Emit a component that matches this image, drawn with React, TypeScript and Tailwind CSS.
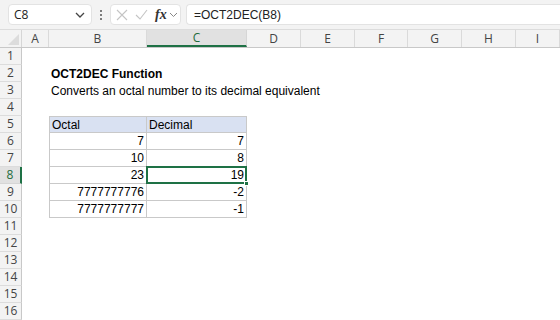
import React from "react";

const COLS = ["A", "B", "C", "D", "E", "F", "G", "H", "I"];
const WIDTHS = [27, 98, 100, 54, 54, 53, 54, 54, 44];

type Cell = { text: string; align?: "left" | "right"; bold?: boolean; table?: "head" | "body" };

function getCell(r: number, c: number): Cell | null {
  if (r === 2 && c === 1) return { text: "OCT2DEC Function", bold: true };
  if (r === 3 && c === 1) return { text: "Converts an octal number to its decimal equivalent" };
  if (r === 5 && c === 1) return { text: "Octal", table: "head" };
  if (r === 5 && c === 2) return { text: "Decimal", table: "head" };
  const data: Record<number, [string, string]> = {
    6: ["7", "7"],
    7: ["10", "8"],
    8: ["23", "19"],
    9: ["7777777776", "-2"],
    10: ["7777777777", "-1"],
  };
  if (data[r] && (c === 1 || c === 2)) return { text: data[r][c - 1], align: "right", table: "body" };
  return null;
}

export default function App() {
  const rows = Array.from({ length: 16 }, (_, i) => i + 1);
  return (
    <div
      className="w-[560px] h-[320px] overflow-hidden bg-white text-black"
      style={{ fontFamily: '"Liberation Sans", Arial, sans-serif' }}
    >
      {/* Toolbar */}
      <div className="h-[30px] bg-[#f3f3f3] border-b border-[#dcdcdc] flex items-center pl-[8px]">
        <div className="w-[84px] shrink-0 h-[21px] bg-white rounded-[4px] border border-[#e3e3e3] flex items-center justify-between pl-[5px] pr-[6px]">
          <span className="text-[12px] text-[#222]" style={{ fontFamily: '"Open Sans", sans-serif' }}>C8</span>
          <svg width="10" height="6" viewBox="0 0 10 6"><path d="M1 1 L5 5 L9 1" fill="none" stroke="#444" strokeWidth="1.3" /></svg>
        </div>
        <div className="w-[18px] shrink-0 flex flex-col items-center justify-center gap-[2px]">
          <div className="w-[2px] h-[2px] bg-[#555] rounded-full" />
          <div className="w-[2px] h-[2px] bg-[#555] rounded-full" />
          <div className="w-[2px] h-[2px] bg-[#555] rounded-full" />
        </div>
        <div className="w-[71px] shrink-0 h-[21px] bg-white rounded-[4px] border border-[#e3e3e3] flex items-center pl-[5px] gap-[7px]">
          <svg width="12" height="12" viewBox="0 0 12 12"><path d="M1 1 L11 11 M11 1 L1 11" stroke="#c4c4c4" strokeWidth="1.1" /></svg>
          <svg width="13" height="11" viewBox="0 0 13 11"><path d="M1 6 L5 10 L12 1" fill="none" stroke="#c4c4c4" strokeWidth="1.1" /></svg>
          <div className="flex items-center gap-[2px]">
            <span className="text-[14px] italic font-bold text-[#333] leading-none" style={{ fontFamily: '"Liberation Serif", serif' }}>fx</span>
            <svg width="9" height="6" viewBox="0 0 9 6"><path d="M1 1 L4.5 4.5 L8 1" fill="none" stroke="#888" strokeWidth="1" /></svg>
          </div>
        </div>
        <div className="ml-[5px] flex-1 h-[21px] bg-white rounded-l-[4px] border border-r-0 border-[#e3e3e3] flex items-center pl-[7px]">
          <span className="text-[12px] text-[#222]">=OCT2DEC(B8)</span>
        </div>
      </div>

      {/* Column headers */}
      <div className="flex h-[18px] bg-[#f3f3f3] border-b border-[#c8c8c8]">
        <div className="w-[22px] shrink-0 h-full relative border-r border-[#d6d6d6]">
          <svg className="absolute right-[2px] bottom-[2px]" width="11" height="11" viewBox="0 0 11 11"><path d="M11 0 L11 11 L0 11 Z" fill="#dcdcdc" /></svg>
        </div>
        {COLS.map((c, i) => (
          <div
            key={c}
            style={{ width: WIDTHS[i] }}
            className={
              "shrink-0 h-full flex items-center justify-center text-[12px] border-r " +
              (c === "C"
                ? "bg-[#e1e1e1] text-[#1e6b3c] border-[#d6d6d6] border-b-2 border-b-[#1e7145]"
                : "text-[#444] border-[#dadada]")
            }
          >
            <span style={{ fontFamily: '"Open Sans", sans-serif' }}>{c}</span>
          </div>
        ))}
      </div>

      {/* Rows */}
      {rows.map((r) => (
        <div key={r} className="flex h-[17px]">
          <div
            className={
              "w-[22px] shrink-0 h-full flex items-center justify-center text-[12px] border-b " +
              (r === 8
                ? "bg-[#e1e1e1] text-[#1e6b3c] border-[#d6d6d6] border-r-2 border-r-[#1e7145]"
                : "bg-[#f3f3f3] text-[#444] border-[#dcdcdc] border-r border-r-[#c8c8c8]")
            }
          >
            <span style={{ fontFamily: '"Open Sans", sans-serif' }}>{r}</span>
          </div>
          {WIDTHS.map((w, c) => {
            const cell = getCell(r, c);
            const inTable = cell?.table;
            let cls = "shrink-0 h-full relative flex items-center text-[12px] whitespace-nowrap ";
            if (inTable) {
              cls += "border-r border-b border-[#c9c9c9] ";
              if (c === 1) cls += "border-l ";
              if (r === 5) cls += "border-t bg-[#d9e1f2] ";
            }
            if (cell?.align === "right") cls += "justify-end pr-[2px] ";
            else cls += "pl-[2px] ";
            if (cell?.bold) cls += "font-bold ";
            const selected = r === 8 && c === 2;
            return (
              <div key={c} style={{ width: w }} className={cls}>
                {cell && <span className={c === 1 && r < 5 ? "relative z-10" : ""}>{cell.text}</span>}
                {selected && (
                  <>
                    <div className="absolute left-[-1px] top-[-1px] right-[-1px] bottom-[-1px] border-2 border-[#1e7145] pointer-events-none" />
                    <div className="absolute right-[-3px] bottom-[-3px] w-[5px] h-[5px] bg-[#1e7145] border border-white z-10" />
                  </>
                )}
              </div>
            );
          })}
        </div>
      ))}
    </div>
  );
}
